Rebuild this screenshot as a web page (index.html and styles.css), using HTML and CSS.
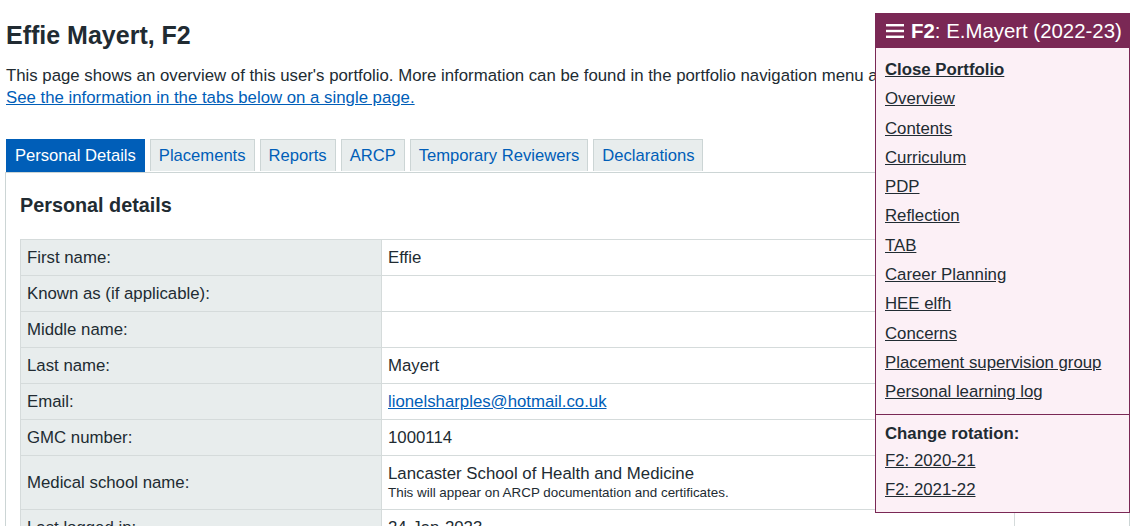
FILE: index.html
```html
<!DOCTYPE html>
<html lang="en">
<head>
<meta charset="utf-8">
<title>Effie Mayert, F2</title>
<link rel="stylesheet" href="styles.css">
</head>
<body>
<main class="page">
  <h1 class="title">Effie Mayert, F2</h1>
  <p class="intro">This page shows an overview of this user's portfolio. More information can be found in the portfolio navigation menu at the top right of the page.<br>
  <a href="#" class="link">See the information in the tabs below on a single page.</a></p>

  <ul class="tabs">
    <li class="tab active">Personal Details</li>
    <li class="tab">Placements</li>
    <li class="tab">Reports</li>
    <li class="tab">ARCP</li>
    <li class="tab">Temporary Reviewers</li>
    <li class="tab">Declarations</li>
  </ul>

  <section class="panel">
    <h2 class="panel-title">Personal details</h2>
    <table class="details">
      <tr><th>First name:</th><td>Effie</td></tr>
      <tr><th>Known as (if applicable):</th><td></td></tr>
      <tr><th>Middle name:</th><td></td></tr>
      <tr><th>Last name:</th><td>Mayert</td></tr>
      <tr><th>Email:</th><td><a href="#" class="link">lionelsharples@hotmail.co.uk</a></td></tr>
      <tr><th>GMC number:</th><td>1000114</td></tr>
      <tr><th>Medical school name:</th><td>Lancaster School of Health and Medicine<span class="hint">This will appear on ARCP documentation and certificates.</span></td></tr>
      <tr><th>Last logged in:</th><td>24-Jan-2023</td></tr>
      <tr><th>Registered:</th><td>01-Aug-2020</td></tr>
    </table>
  </section>
</main>

<nav class="menu">
  <div class="menu-head">
    <svg class="burger" width="18" height="14" viewBox="0 0 18 14" aria-hidden="true">
      <rect x="0" y="0" width="18" height="2.4" fill="#fff"/>
      <rect x="0" y="5.8" width="18" height="2.4" fill="#fff"/>
      <rect x="0" y="11.6" width="18" height="2.4" fill="#fff"/>
    </svg>
    <span><b>F2</b>: E.Mayert (2022-23)</span>
  </div>
  <div class="menu-body">
    <a href="#" class="menu-link strong">Close Portfolio</a>
    <a href="#" class="menu-link">Overview</a>
    <a href="#" class="menu-link">Contents</a>
    <a href="#" class="menu-link">Curriculum</a>
    <a href="#" class="menu-link">PDP</a>
    <a href="#" class="menu-link">Reflection</a>
    <a href="#" class="menu-link">TAB</a>
    <a href="#" class="menu-link">Career Planning</a>
    <a href="#" class="menu-link">HEE elfh</a>
    <a href="#" class="menu-link">Concerns</a>
    <a href="#" class="menu-link">Placement supervision group</a>
    <a href="#" class="menu-link">Personal learning log</a>
  </div>
  <div class="menu-rot">
    <div class="rot-title">Change rotation:</div>
    <a href="#" class="menu-link">F2: 2020-21</a>
    <a href="#" class="menu-link">F2: 2021-22</a>
  </div>
</nav>
</body>
</html>
```

FILE: styles.css
```css
html, body {
  margin: 0;
  padding: 0;
  overflow: hidden;
  background: #fff;
}
body {
  font-family: Arial, "Liberation Sans", sans-serif;
  font-size: 16.8px;
  color: #212b32;
}
.page {
  width: 1125px;
  padding: 0 0 0 5px;
}
.title {
  margin: 21px 0 0 1px;
  font-size: 25px;
  line-height: 28px;
  font-weight: bold;
}
.intro {
  margin: 16px 0 0 1px;
  line-height: 22px;
  white-space: nowrap;
}
.link {
  color: #005eb8;
  text-decoration: underline;
}
.tabs {
  list-style: none;
  margin: 30px 0 0 0;
  padding: 0 0 0 1px;
  display: flex;
  gap: 5px;
  font-size: 16.6px;
}
.tab {
  padding: 0 8px;
  border: 1px solid #ccd5d5;
  border-bottom: none;
  background: #e8eded;
  color: #005eb8;
  white-space: nowrap;
  height: 31px;
  line-height: 31px;
}
.tab.active {
  background: #005eb8;
  border-color: #005eb8;
  color: #fff;
  height: 32px;
  line-height: 32px;
}
.panel {
  border: 1px solid #ccd5d5;
  padding: 20px 14px 40px 14px;
  background: #fff;
}
.panel-title {
  margin: 0;
  font-size: 19.8px;
  line-height: 24px;
  font-weight: bold;
}
.details {
  margin-top: 22px;
  width: 995px;
  border-collapse: collapse;
}
.details th,
.details td {
  border: 1px solid #d5dbdb;
  padding: 7px 6px;
  line-height: 21px;
  text-align: left;
  vertical-align: middle;
  font-weight: normal;
}
.details th {
  width: 348px;
  background: #e8eded;
}
.hint {
  display: block;
  font-size: 13.4px;
  line-height: 18px;
}
.menu {
  position: fixed;
  left: 875px;
  top: 13px;
  width: 253px;
  border: 1px solid #7a2855;
  background: #fcf0f6;
}
.menu-head {
  background: #7a2855;
  color: #fff;
  height: 34px;
  display: flex;
  align-items: center;
  gap: 7px;
  padding: 0 0 0 10px;
  font-size: 20.4px;
  white-space: nowrap;
}
.burger {
  flex: none;
}
.menu-body {
  display: flex;
  flex-direction: column;
  gap: 8.3px;
  padding: 11px 9px 12px 9px;
  border-bottom: 1px solid #7a2855;
}
.menu-link {
  color: #212b32;
  text-decoration: underline;
  line-height: 21px;
  align-self: flex-start;
}
.menu-link.strong {
  font-weight: bold;
}
.menu-rot {
  display: flex;
  flex-direction: column;
  gap: 8px;
  padding: 8px 9px 12px 9px;
}
.rot-title {
  font-weight: bold;
  line-height: 21px;
  margin-bottom: -2px;
}
```
